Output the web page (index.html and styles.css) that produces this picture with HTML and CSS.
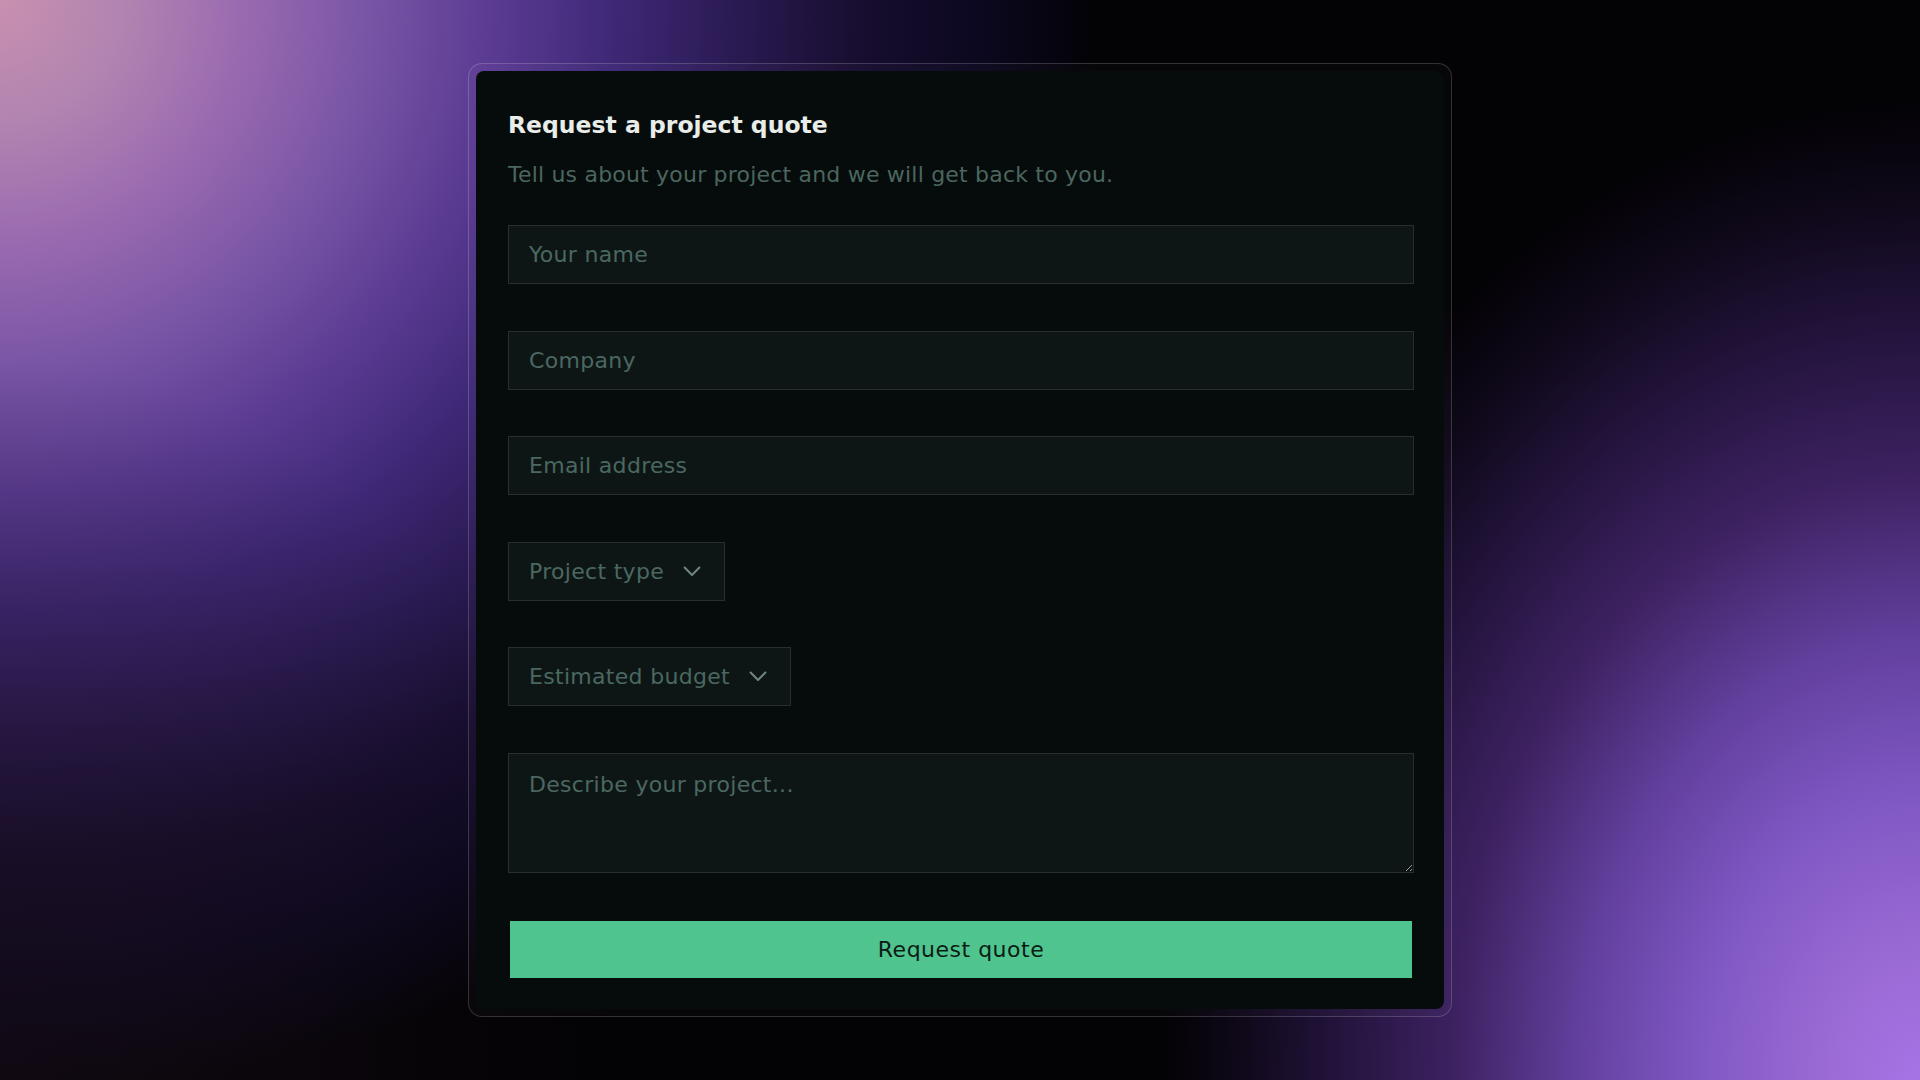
FILE: index.html
```html
<!DOCTYPE html>
<html lang="en">
<head>
<meta charset="utf-8">
<title>Request a project quote</title>
<link rel="stylesheet" href="styles.css">
</head>
<body>
<main class="page">
  <div class="frame">
    <form class="card">
      <h1 class="title">Request a project quote</h1>
      <p class="subtitle">Tell us about your project and we will get back to you.</p>
      <div class="fields">
        <input class="field" type="text" placeholder="Your name">
        <input class="field" type="text" placeholder="Company">
        <input class="field" type="email" placeholder="Email address">
        <button type="button" class="select"><span>Project type</span><svg class="chev" width="18" height="11" viewBox="0 0 18 11"><polyline points="1.6,1.6 9,9 16.4,1.6" fill="none" stroke="currentColor" stroke-width="2.1" stroke-linecap="round" stroke-linejoin="round"/></svg></button>
        <button type="button" class="select"><span>Estimated budget</span><svg class="chev" width="18" height="11" viewBox="0 0 18 11"><polyline points="1.6,1.6 9,9 16.4,1.6" fill="none" stroke="currentColor" stroke-width="2.1" stroke-linecap="round" stroke-linejoin="round"/></svg></button>
        <textarea class="field area" placeholder="Describe your project..."></textarea>
      </div>
      <button type="button" class="submit">Request quote</button>
    </form>
  </div>
</main>
</body>
</html>
```

FILE: styles.css
```css
html {
  color-scheme: dark;
}

html, body {
  margin: 0;
  height: 100%;
}

body {
  font-family: "DejaVu Sans", "Liberation Sans", sans-serif;
  background:
    radial-gradient(ellipse 620px 720px at 0 100%, rgba(26, 14, 24, 0.55) 0, rgba(26, 14, 24, 0.3) 50%, rgba(0, 0, 0, 0) 100%),
    radial-gradient(circle 1100px at 0 0, #c890b0 0%, #b284b0 11%, #9a6ab0 22%, #7a56a6 33%, #5a3b92 45%, #3e2876 56%, #2a1a52 67%, #180e30 78%, #0c0820 89%, rgba(0, 0, 0, 0) 100%),
    radial-gradient(ellipse 760px 980px at 100% 100%, #a674e6 0%, #9a6ad4 13%, #8058c4 29%, #62409e 45%, #3e2262 61%, #24143e 76%, #0e0818 90%, rgba(0, 0, 0, 0) 100%),
    #030205;
}

.page {
  height: 100vh;
  display: flex;
  align-items: center;
  justify-content: center;
}

.frame {
  padding: 7px;
  border: 1.5px solid rgba(255, 255, 255, 0.17);
  border-radius: 14px;
  background: rgba(255, 255, 255, 0.02);
}

.card {
  width: 968px;
  box-sizing: border-box;
  padding: 31px 30px 31px 32px;
  background: #060c0b;
  border-radius: 8px;
}

.title {
  margin: 8px 0 0;
  font-size: 23.5px;
  line-height: 30px;
  font-weight: 700;
  color: #e8ede9;
}

.subtitle {
  margin: 20px 0 0;
  font-size: 22px;
  line-height: 30px;
  letter-spacing: 0.2px;
  color: #4b665f;
}

.fields {
  margin-top: 35px;
  display: flex;
  flex-direction: column;
  gap: 46.6px;
}

.field {
  display: block;
  width: 100%;
  height: 59px;
  box-sizing: border-box;
  margin: 0;
  padding: 0 20px;
  border: 1px solid #262f2d;
  border-radius: 0;
  background: #0e1615;
  font-family: inherit;
  font-size: 22px;
  letter-spacing: 0.3px;
  color: #c9d4d0;
  outline: none;
}

.field::placeholder {
  color: #4a6861;
  opacity: 1;
}

.area {
  height: 120px;
  padding: 16px 20px;
  line-height: 30px;
  resize: both;
}

.select {
  align-self: flex-start;
  display: inline-flex;
  align-items: center;
  gap: 19px;
  height: 59px;
  box-sizing: border-box;
  margin: 0;
  padding: 0 23px 0 20px;
  border: 1px solid #262f2d;
  border-radius: 0;
  background: #0e1615;
  font-family: inherit;
  font-size: 22px;
  letter-spacing: 0.3px;
  color: #4a6861;
  cursor: pointer;
}

.chev {
  display: block;
  color: #6d8480;
}

.submit {
  display: block;
  width: calc(100% - 4px);
  height: 57px;
  margin: 48px 2px 0;
  border: none;
  border-radius: 0;
  background: #50c48f;
  font-family: inherit;
  font-size: 22px;
  letter-spacing: 0.5px;
  color: #0a1c14;
  cursor: pointer;
}
```
